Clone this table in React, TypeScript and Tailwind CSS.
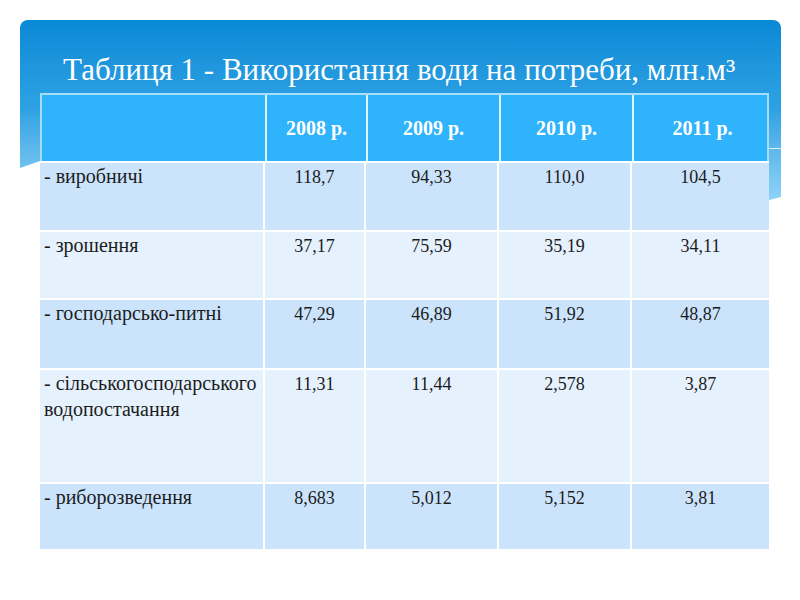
import React from "react";

const rows: { label: string[]; vals: string[]; h: string; bg: string }[] = [
  { label: ["- виробничі"], vals: ["118,7", "94,33", "110,0", "104,5"], h: "h-[69px]", bg: "bg-[#cbe4fc]" },
  { label: ["- зрошення"], vals: ["37,17", "75,59", "35,19", "34,11"], h: "h-[68px]", bg: "bg-[#e5f1fd]" },
  { label: ["- господарсько-питні"], vals: ["47,29", "46,89", "51,92", "48,87"], h: "h-[70px]", bg: "bg-[#cbe4fc]" },
  {
    label: ["- сільськогосподарського", "водопостачання"],
    vals: ["11,31", "11,44", "2,578", "3,87"],
    h: "h-[114px]",
    bg: "bg-[#e5f1fd]",
  },
  { label: ["- риборозведення"], vals: ["8,683", "5,012", "5,152", "3,81"], h: "h-[67px]", bg: "bg-[#cbe4fc]" },
];

const cols = "grid grid-cols-[225px_101px_133px_133px_137px]";

export default function App() {
  return (
    <div
      className="w-[800px] h-[600px] bg-white pt-[20px] pl-[20px] overflow-hidden"
      style={{ fontFamily: '"Liberation Serif", "Times New Roman", serif' }}
    >
      <div className="relative w-[761px] h-[180px] rounded-t-[8px] bg-gradient-to-b from-[#0889d6] via-[#2ea2e3] to-[#8ed3f8] [clip-path:polygon(0_0,100%_0,100%_177px,749px_180px,749px_140px,20px_141px,0_148px)] pt-[30px] pl-[43px]">
        <h1 className="text-white text-[31px] leading-[40px] font-normal whitespace-nowrap">
          Таблиця 1 - Використання води на потреби, млн.м³
        </h1>
        <div className="absolute right-0 top-[128px] w-[12px] h-[1px] bg-[#d8f1fd]" />
      </div>

      <div className="ml-[20px] -mt-[107px] w-[729px] relative">
        <div className={`${cols} h-[68px] bg-[#2fb3fc] border-t-2 border-x-2 border-[#a5defa]`}>
          <div className="border-r-2 border-[#e0f4fe]" />
          {["2008 р.", "2009 р.", "2010 р.", "2011 р."].map((y, i) => (
            <div
              key={y}
              className={`flex items-center justify-center text-white font-bold text-[20px] ${i < 3 ? "border-r-2 border-[#e0f4fe]" : ""}`}
            >
              {y}
            </div>
          ))}
        </div>
        {rows.map((r, ri) => (
          <div key={ri} className={`${cols} ${r.h} ${r.bg} border-t-2 border-white`}>
            <div className="border-r-2 border-white pl-[4px] pt-0 text-[20px] leading-[26px] text-[#1c1c1c]">
              {r.label.map((l) => (
                <div key={l}>{l}</div>
              ))}
            </div>
            {r.vals.map((v, i) => (
              <div
                key={i}
                className={`text-center pt-[1px] text-[18px] leading-[26px] text-[#1c1c1c] ${i < 3 ? "border-r-2 border-white" : ""}`}
              >
                {v}
              </div>
            ))}
          </div>
        ))}
      </div>
    </div>
  );
}
